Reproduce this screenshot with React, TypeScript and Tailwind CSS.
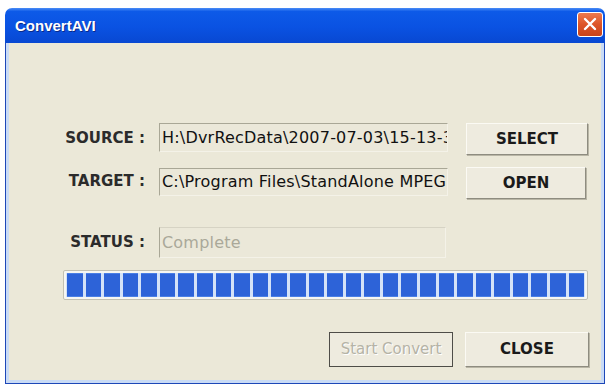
import React from "react";

const labelCls =
  "w-[136px] shrink-0 text-right text-[15px] font-bold text-[#2b2b2b] [font-family:'DejaVu_Sans',sans-serif] leading-none";

const fieldCls =
  "shrink-0 overflow-hidden whitespace-nowrap bg-[#ebe8d9] border border-t-[#a9a796] border-l-[#a9a796] border-r-[#f4f2e8] border-b-[#f4f2e8] pl-[2px] flex items-center text-[16px] tracking-[0.2px] text-[#111] [font-family:'DejaVu_Sans',sans-serif] leading-none";

const btnCls =
  "shrink-0 flex items-center justify-center bg-[#eeebdf] border border-t-[#fbfaf4] border-l-[#fbfaf4] border-r-[#8e8c80] border-b-[#8e8c80] shadow-[1px_1px_0_#b9b6a6] text-[15px] font-bold text-[#1a1a1a] [font-family:'DejaVu_Sans',sans-serif] leading-none";

export default function App() {
  const segments = Array.from({ length: 28 }, (_, i) => i);
  return (
    <div className="w-[609px] h-[385px] bg-white pt-[8px] pl-[5px]">
      <div className="w-[600px] h-[376px] flex flex-col">
        {/* Title bar */}
        <div className="h-[35px] shrink-0 rounded-t-[7px] bg-[linear-gradient(180deg,#4a8cf6_0%,#0d5ae8_10%,#0a52e2_55%,#0848d2_100%)] flex items-center pl-[10px] pr-[2px]">
          <span className="text-white font-bold text-[15px] [font-family:'Liberation_Sans',sans-serif] [text-shadow:1px_1px_0_#0a2a8a] leading-none">
            ConvertAVI
          </span>
          <div className="ml-auto mt-[-3px] w-[26px] h-[25px] rounded-[3px] border border-white bg-[linear-gradient(180deg,#ec7a4f_0%,#dd5427_50%,#c8431c_100%)] flex items-center justify-center">
            <svg width="14" height="14" viewBox="0 0 14 14">
              <path d="M2 2 L12 12 M12 2 L2 12" stroke="white" strokeWidth="2.4" strokeLinecap="round" />
            </svg>
          </div>
        </div>
        {/* Body with borders */}
        <div className="flex-1 flex border-l border-r border-b border-[#1d47b8] bg-[#c9dbf6] px-[3px] pb-[3px]">
          <div className="flex-1 bg-[#ebe8d8] flex flex-col pt-[80px]">
            {/* Row 1 */}
            <div className="flex items-start">
              <div className={labelCls + " mt-[8px]"}>SOURCE :</div>
              <div className={fieldCls + " ml-[14px] w-[289px] h-[29px]"}>H:\DvrRecData\2007-07-03\15-13-37</div>
              <div className={btnCls + " ml-[18px] w-[122px] h-[32px]"}>SELECT</div>
            </div>
            {/* Row 2 */}
            <div className="flex items-start mt-[12px]">
              <div className={labelCls + " mt-[7px]"}>TARGET :</div>
              <div className={fieldCls + " ml-[14px] w-[289px] h-[28px] mt-[1px]"}>C:\Program Files\StandAlone MPEG</div>
              <div className={btnCls + " ml-[18px] w-[120px] h-[32px]"}>OPEN</div>
            </div>
            {/* Row 3 */}
            <div className="flex items-center mt-[28px]">
              <div className={labelCls}>STATUS :</div>
              <div className={fieldCls + " ml-[14px] w-[287px] h-[31px] text-[#aaa899] border-t-[#d6d3c4] border-l-[#9c9a8c]"}>
                Complete
              </div>
            </div>
            {/* Progress */}
            <div className="ml-[54px] mt-[12px] w-[525px] h-[30px] border border-[#c2c0b2] bg-[#f6f6f2] rounded-[2px] p-[2px]">
              <div className="w-full h-full flex gap-[3px] px-[1px] bg-[#d3e2f8]">
                {segments.map((i) => (
                  <div key={i} className="flex-1 bg-[#2d63d8] border-y border-[#4a7fe6]" />
                ))}
              </div>
            </div>
            {/* Bottom buttons */}
            <div className="flex mt-[32px] ml-[320px]">
              <div className="w-[124px] h-[35px] border border-[#4e4d48] bg-[#eeebdf] flex items-center justify-center text-[15px] text-[#b5b3a6] [text-shadow:1px_1px_0_#ffffff] [font-family:'DejaVu_Sans',sans-serif] leading-none">
                Start Convert
              </div>
              <div className={btnCls + " ml-[12px] w-[124px] h-[35px]"}>CLOSE</div>
            </div>
          </div>
        </div>
      </div>
    </div>
  );
}
